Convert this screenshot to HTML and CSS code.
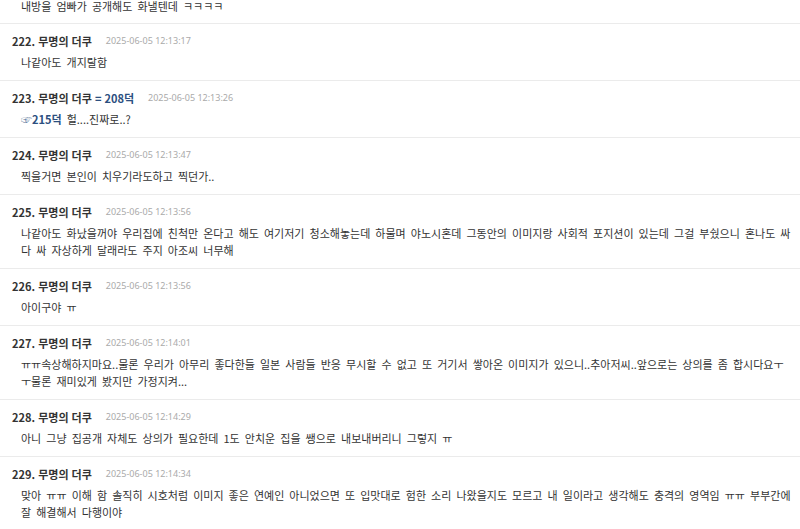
FILE: index.html
```html
<!DOCTYPE html>
<html lang="ko">
<head>
    <meta charset="UTF-8">
    <meta name="viewport" content="width=device-width, initial-scale=1.0">
    <title>댓글</title>
    <link rel="stylesheet" href="styles.css">
</head>
<body>
    <div class="thread">
        <div class="reply cut">
            <p class="reply-body">내방을 엄빠가 공개해도 화낼텐데 ㅋㅋㅋㅋ</p>
        </div>

        <div class="reply">
            <div class="reply-head">
                <span class="reply-name">222. 무명의 더쿠</span>
                <span class="reply-date">2025-06-05 12:13:17</span>
            </div>
            <p class="reply-body">나같아도 개지랄함</p>
        </div>

        <div class="reply">
            <div class="reply-head">
                <span class="reply-name">223. 무명의 더쿠 <span class="ref">= 208덕</span></span>
                <span class="reply-date">2025-06-05 12:13:26</span>
            </div>
            <p class="reply-body"><span class="hand">☞</span><span class="ref">215덕</span> 헐....진짜로..?</p>
        </div>

        <div class="reply">
            <div class="reply-head">
                <span class="reply-name">224. 무명의 더쿠</span>
                <span class="reply-date">2025-06-05 12:13:47</span>
            </div>
            <p class="reply-body">찍을거면 본인이 치우기라도하고 찍던가..</p>
        </div>

        <div class="reply">
            <div class="reply-head">
                <span class="reply-name">225. 무명의 더쿠</span>
                <span class="reply-date">2025-06-05 12:13:56</span>
            </div>
            <p class="reply-body">나같아도 화났을꺼야 우리집에 친척만 온다고 해도 여기저기 청소해놓는데 하물며 야노시혼데 그동안의 이미지랑 사회적 포지션이 있는데 그걸 부쉈으니 혼나도 싸다 싸 자상하게 달래라도 주지 아조씨 너무해</p>
        </div>

        <div class="reply">
            <div class="reply-head">
                <span class="reply-name">226. 무명의 더쿠</span>
                <span class="reply-date">2025-06-05 12:13:56</span>
            </div>
            <p class="reply-body">아이구야 ㅠ</p>
        </div>

        <div class="reply">
            <div class="reply-head">
                <span class="reply-name">227. 무명의 더쿠</span>
                <span class="reply-date">2025-06-05 12:14:01</span>
            </div>
            <p class="reply-body">ㅠㅠ속상해하지마요..물론 우리가 아무리 좋다한들 일본 사람들 반응 무시할 수 없고 또 거기서 쌓아온 이미지가 있으니..추아저씨..앞으로는 상의를 좀 합시다요ㅜㅜ물론 재미있게 봤지만 가정지켜...</p>
        </div>

        <div class="reply">
            <div class="reply-head">
                <span class="reply-name">228. 무명의 더쿠</span>
                <span class="reply-date">2025-06-05 12:14:29</span>
            </div>
            <p class="reply-body">아니 그냥 집공개 자체도 상의가 필요한데 1도 안치운 집을 쌩으로 내보내버리니 그렇지 ㅠ</p>
        </div>

        <div class="reply">
            <div class="reply-head">
                <span class="reply-name">229. 무명의 더쿠</span>
                <span class="reply-date">2025-06-05 12:14:34</span>
            </div>
            <p class="reply-body">맞아 ㅠㅠ 이해 함 솔직히 시호처럼 이미지 좋은 연예인 아니었으면 또 입맛대로 험한 소리 나왔을지도 모르고 내 일이라고 생각해도 충격의 영역임 ㅠㅠ 부부간에 잘 해결해서 다행이야</p>
        </div>
    </div>
</body>
</html>
```

FILE: styles.css
```css
/* Basic reset */
* {
    margin: 0;
    padding: 0;
    box-sizing: border-box;
}

body {
    font-family: "Noto Sans CJK KR", "Noto Sans", sans-serif;
    background: #fff;
    color: #333;
    overflow: hidden;
}

/* Comment list */
.thread {
    display: flex;
    flex-direction: column;
}

.reply {
    display: flex;
    flex-direction: column;
    gap: 4px;
    padding: 7px 8px 9px 12px;
    border-top: 1px solid #ebebeb;
}

/* the list is scrolled, so the first comment is only half in view */
.reply.cut {
    margin-top: -2px;
    padding-top: 0;
    padding-bottom: 8px;
    border-top: none;
}

/* Number, nickname and time */
.reply-head {
    display: flex;
    align-items: center;
    gap: 14px;
    height: 19px;
}

.reply-name {
    font-size: 11px;
    font-weight: bold;
    color: #333;
    white-space: nowrap;
}

.reply-date {
    font-family: "Noto Sans", sans-serif;
    font-size: 9px;
    color: #aaa;
}

/* Comment text */
.reply-body {
    padding-left: 9px;
    font-size: 11px;
    line-height: 17px;
    word-spacing: 2px;
    color: #333;
}

/* Links to other comments */
.ref {
    color: #2c4f80;
    font-weight: bold;
}

.hand {
    color: #6f87a8;
}
```
